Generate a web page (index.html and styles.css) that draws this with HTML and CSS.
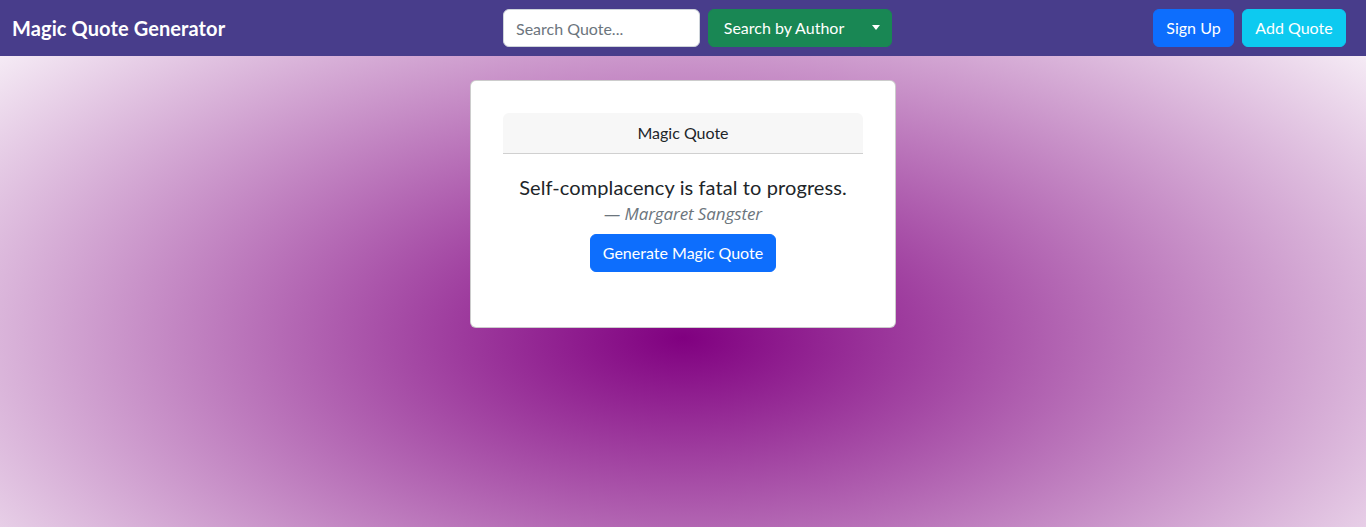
FILE: index.html
```html
<!DOCTYPE html>
<html lang="en">
<head>
<meta charset="utf-8">
<title>Magic Quote Generator</title>
<link rel="stylesheet" href="styles.css">
</head>
<body>
<nav class="navbar">
  <a class="brand" href="#">Magic Quote Generator</a>
  <form class="search">
    <input class="search-input" type="text" placeholder="Search Quote...">
    <div class="btn-group">
      <button type="button" class="btn btn-success btn-main">Search by Author</button>
      <button type="button" class="btn btn-success btn-toggle"><span class="caret"></span></button>
    </div>
  </form>
  <div class="actions">
    <button type="button" class="btn btn-primary btn-signup">Sign Up</button>
    <button type="button" class="btn btn-info btn-add">Add Quote</button>
  </div>
</nav>
<main class="stage">
  <section class="card">
    <div class="card-header">Magic Quote</div>
    <div class="card-body">
      <p class="quote">Self-complacency is fatal to progress.</p>
      <p class="author">— Margaret Sangster</p>
      <button type="button" class="btn btn-primary btn-generate">Generate Magic Quote</button>
    </div>
  </section>
</main>
</body>
</html>
```
FILE: styles.css
```css
* { box-sizing: border-box; }
html, body { margin: 0; padding: 0; }
body {
  font-family: "Segoe UI", Lato, "Noto Sans", "Liberation Sans", sans-serif;
  font-size: 16px;
  line-height: 1.5;
  color: #212529;
  background: #fff;
  height: 527px;
  overflow: hidden;
}
.navbar {
  height: 56px;
  background: #483d8b;
  display: grid;
  grid-template-columns: 491px auto 1fr;
  align-items: center;
  padding: 0 20px 0 12px;
}
.brand {
  color: #fff;
  font-weight: 700;
  font-size: 20px;
  letter-spacing: 0.1px;
  text-decoration: none;
  white-space: nowrap;
}
.search {
  display: flex;
  gap: 8px;
  margin: 0;
}
.search-input {
  width: 197px;
  height: 38px;
  border: 1px solid #ced4da;
  border-radius: 6px;
  padding: 6px 12px;
  font: inherit;
  color: #212529;
  background: #fff;
}
.search-input::placeholder { color: #6c757d; }
.btn-group { display: flex; }
.btn {
  height: 38px;
  border: 1px solid transparent;
  border-radius: 6px;
  padding: 6px 12px;
  font: inherit;
  color: #fff;
  cursor: pointer;
  white-space: nowrap;
}
.btn-success { background: #198754; border-color: #198754; }
.btn-primary { background: #0d6efd; border-color: #0d6efd; }
.btn-info { background: #0dcaf0; border-color: #0dcaf0; color: #fff; }
.btn-main {
  width: 152px;
  border-radius: 6px 0 0 6px;
  padding: 6px 0;
}
.btn-toggle {
  width: 32px;
  border-radius: 0 6px 6px 0;
  padding: 0;
  display: flex;
  align-items: center;
  justify-content: center;
}
.caret {
  display: block;
  width: 0;
  height: 0;
  border-left: 4.5px solid transparent;
  border-right: 4.5px solid transparent;
  border-top: 5px solid #fff;
  margin-top: -1px;
}
.actions {
  display: flex;
  justify-content: flex-end;
  gap: 8px;
}
.btn-signup { width: 81px; padding: 6px 0; }
.btn-add { width: 104px; padding: 6px 0; }

.stage {
  height: 471px;
  background: radial-gradient(966px 478px at 50% 282px, #800080 0%, #ffffff 100%);
  display: flex;
  flex-direction: column;
  align-items: center;
  padding-top: 24px;
}
.card {
  width: 426px;
  background: #fff;
  border: 1px solid rgba(0, 0, 0, 0.2);
  border-radius: 6px;
  padding: 32px;
}
.card-header {
  height: 41px;
  background: #f7f7f7;
  border-bottom: 1px solid #d0d0d0;
  border-radius: 6px 6px 0 0;
  text-align: center;
  padding: 8px 16px;
  color: #212529;
}
.card-body {
  display: flex;
  flex-direction: column;
  align-items: center;
  padding: 18px 0 23px;
}
.quote {
  margin: 0;
  font-size: 20px;
  line-height: 30px;
  letter-spacing: 0.1px;
  color: #212529;
}
.author {
  margin: 0;
  font-family: "Open Sans", "Noto Sans", sans-serif;
  font-style: italic;
  font-size: 17px;
  color: #6c757d;
  line-height: 24px;
  letter-spacing: -0.1px;
}
.btn-generate {
  margin-top: 8px;
  width: 186px;
  padding: 6px 0;
}
```
